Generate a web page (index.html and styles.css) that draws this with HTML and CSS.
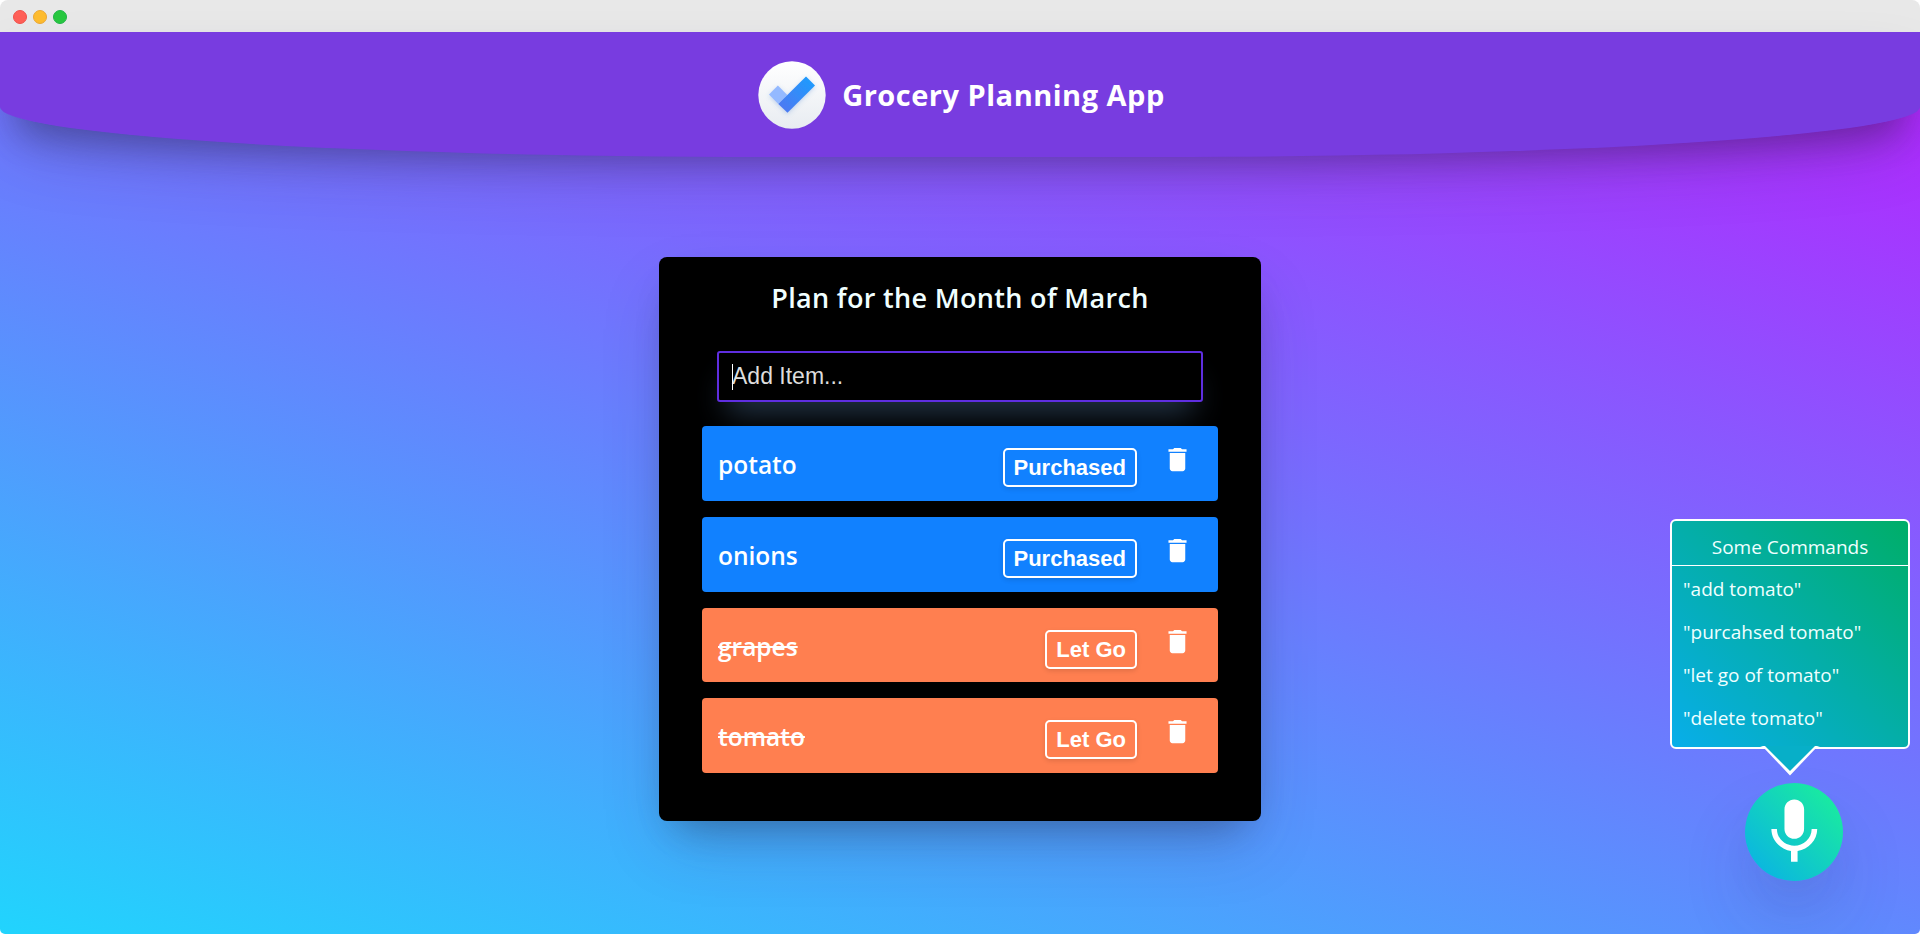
FILE: index.html
```html
<!DOCTYPE html>
<html lang="en">
<head>
<meta charset="utf-8">
<title>Grocery Planning App</title>
<link rel="stylesheet" href="styles.css">
</head>
<body>
<svg class="defs" width="0" height="0" aria-hidden="true">
  <symbol id="trash" viewBox="0 0 24 24"><path d="M6 19c0 1.1.9 2 2 2h8c1.1 0 2-.9 2-2V7H6v12zM19 4h-3.5l-1-1h-5l-1 1H5v2h14V4z"/></symbol>
</svg>
<div class="window">
  <div class="titlebar"><i class="dot red"></i><i class="dot yellow"></i><i class="dot green"></i></div>
  <div class="page">
    <header class="header">
      <svg class="logo" viewBox="0 0 68 68">
        <defs>
          <linearGradient id="disc" x1="0" y1="0" x2="0" y2="1"><stop offset="0" stop-color="#fff"/><stop offset="1" stop-color="#e8ecf1"/></linearGradient>
          <linearGradient id="tick" x1="0" y1="1" x2="1" y2="0"><stop offset="0" stop-color="#5375f0"/><stop offset="1" stop-color="#189fff"/></linearGradient>
          <filter id="soft" x="-30%" y="-30%" width="160%" height="170%"><feDropShadow dx="0" dy="1.5" stdDeviation="2" flood-color="#4a7fd0" flood-opacity=".3"/></filter>
        </defs>
        <circle cx="34" cy="34" r="33.7" fill="url(#disc)"/>
        <g filter="url(#soft)">
          <path d="M11 33.4 19.9 24.6 29.3 34 20.3 43z" fill="#94b9ff"/>
          <path d="M20.3 43 48 15.4 57 24.5 29.5 51.8z" fill="url(#tick)"/>
        </g>
      </svg>
      <h1 class="brand">Grocery Planning App</h1>
    </header>
    <main class="card">
      <h2 class="card-title">Plan for the Month of March</h2>
      <div class="field"><span class="caret"></span>Add Item...</div>
      <ul class="items">
        <li class="item"><span class="name">potato</span><button class="toggle">Purchased</button><svg class="trash"><use href="#trash"/></svg></li>
        <li class="item"><span class="name">onions</span><button class="toggle">Purchased</button><svg class="trash"><use href="#trash"/></svg></li>
        <li class="item done"><span class="name">grapes</span><button class="toggle">Let Go</button><svg class="trash"><use href="#trash"/></svg></li>
        <li class="item done"><span class="name">tomato</span><button class="toggle">Let Go</button><svg class="trash"><use href="#trash"/></svg></li>
      </ul>
    </main>
    <aside class="voice">
      <div class="commands">
        <h3 class="commands-title">Some Commands</h3>
        <p class="command">"add tomato"</p>
        <p class="command">"purcahsed tomato"</p>
        <p class="command">"let go of tomato"</p>
        <p class="command">"delete tomato"</p>
        <svg class="pointer" viewBox="0 0 60 30"><path d="M0 0H60L57 1 30 29.5 3 1z" fill="#fff"/><path d="M5 0H55L30 25z" fill="#07afc8"/></svg>
      </div>
      <button class="mic"><svg viewBox="0 0 24 24"><path d="M12 14c1.66 0 2.99-1.34 2.99-3L15 5c0-1.66-1.34-3-3-3S9 3.34 9 5v6c0 1.66 1.34 3 3 3zm5.3-3c0 3-2.54 5.1-5.3 5.1S6.7 14 6.7 11H5c0 3.41 2.72 6.23 6 6.72V21h2v-3.28c3.28-.48 6-3.3 6-6.72h-1.7z"/></svg></button>
    </aside>
  </div>
</div>
</body>
</html>
```
FILE: styles.css
```css
:root { --lift: 0 30px 60px -12px rgba(50, 50, 93, .25), 0 18px 36px -18px rgba(0, 0, 0, .3); }
* { box-sizing: border-box; margin: 0; padding: 0; }
body { background: #fff; font-family: "Open Sans", "Noto Sans", sans-serif; color: #fff; overflow: hidden; }
.defs { position: absolute; }
.window { height: 934px; display: flex; flex-direction: column; border-radius: 8px 8px 5px 5px; overflow: hidden; }
.titlebar { height: 32px; flex: none; background: #e8e8e8; display: flex; align-items: center; gap: 6px; padding: 2px 0 0 13px; position: relative; }
.dot { width: 14px; height: 14px; border-radius: 50%; border: 1px solid; }
.red { background: #ff5f57; border-color: #f0514b; }
.yellow { background: #febc2e; border-color: #eba834; }
.green { background: #28c840; border-color: #20b548; }
.page { position: relative; flex: 1; background: linear-gradient(19deg, #21d4fd 0%, #b721ff 100%); display: flex; flex-direction: column; align-items: center; }
.header { width: 100%; height: 125px; flex: none; background: #783ce0; border-radius: 0 0 40% 40%; display: flex; justify-content: center; align-items: center; gap: 16px; padding-left: 3px; box-shadow: var(--lift); }
.logo { width: 68px; height: 68px; }
.brand { font-size: 29px; line-height: 38px; font-weight: 700; letter-spacing: .5px; white-space: nowrap; }
.card { width: 602px; height: 564px; margin-top: 100px; padding: 22px 43px 0; background: #000; border-radius: 8px; box-shadow: var(--lift); }
.card-title { text-align: center; color: #f0ffff; font-size: 27px; line-height: 38px; font-weight: 600; letter-spacing: .33px; white-space: nowrap; }
.field { position: relative; margin: 34px 15px 0; height: 51px; border: 2px solid #5f2ee0; border-radius: 3px; background: #000; padding: 0 13px; font: 23px/46px "Liberation Sans", Arial, sans-serif; color: #ddd; box-shadow: 0 20px 30px -10px rgb(38, 57, 77); }
.caret { position: absolute; left: 13px; top: 11px; width: 1px; height: 26px; background: #fff; }
.items { list-style: none; position: relative; margin-top: 24.33px; display: flex; flex-direction: column; gap: 16px; }
.item { height: 74.67px; background: #1181ff; border-radius: 4px; display: flex; align-items: flex-start; padding: 22px 24px 0 16px; }
.done { background: #ff7f50; }
.name { flex: 1; font-size: 24.5px; line-height: 34px; font-weight: 600; }
.done .name { text-decoration: line-through; text-decoration-thickness: 2px; }
.toggle { height: 39px; padding: 0 9px; border: 2px solid #fff; border-radius: 5px; background: transparent; color: #fff; font: bold 22px/33px "Liberation Sans", Arial, sans-serif; box-shadow: 0 2px 5px rgba(0, 0, 0, .12); }
.trash { width: 31px; height: 31px; margin: -4px 1px 0 25px; fill: #fff; }
.voice { position: absolute; left: 1670px; top: 487px; width: 240px; display: flex; flex-direction: column; }
.commands { position: relative; height: 230px; border: 2px solid #fff; border-radius: 6px; background: linear-gradient(45deg, #08aeea 0%, #00ae68 100%); color: #f0ffff; }
.commands-title { height: 45px; border-bottom: 1px solid #fff; padding-top: 12px; text-align: center; font-size: 19px; line-height: 28px; font-weight: 400; }
.command { height: 43px; padding-left: 11px; font-size: 19px; line-height: 47px; white-space: nowrap; }
.pointer { position: absolute; left: 88px; top: 225px; width: 60px; height: 30px; }
.mic { margin: 34px 0 0 75px; width: 98px; height: 98px; border: 0; border-radius: 50%; background: linear-gradient(45deg, #08aeea 0%, #1cf396 100%); display: flex; align-items: center; justify-content: center; box-shadow: 0 40px 80px -10px rgba(50, 50, 93, .2), 0 20px 50px -20px rgba(50, 50, 93, .1); }
.mic svg { width: 78.6px; height: 78.6px; fill: #fff; }
```
